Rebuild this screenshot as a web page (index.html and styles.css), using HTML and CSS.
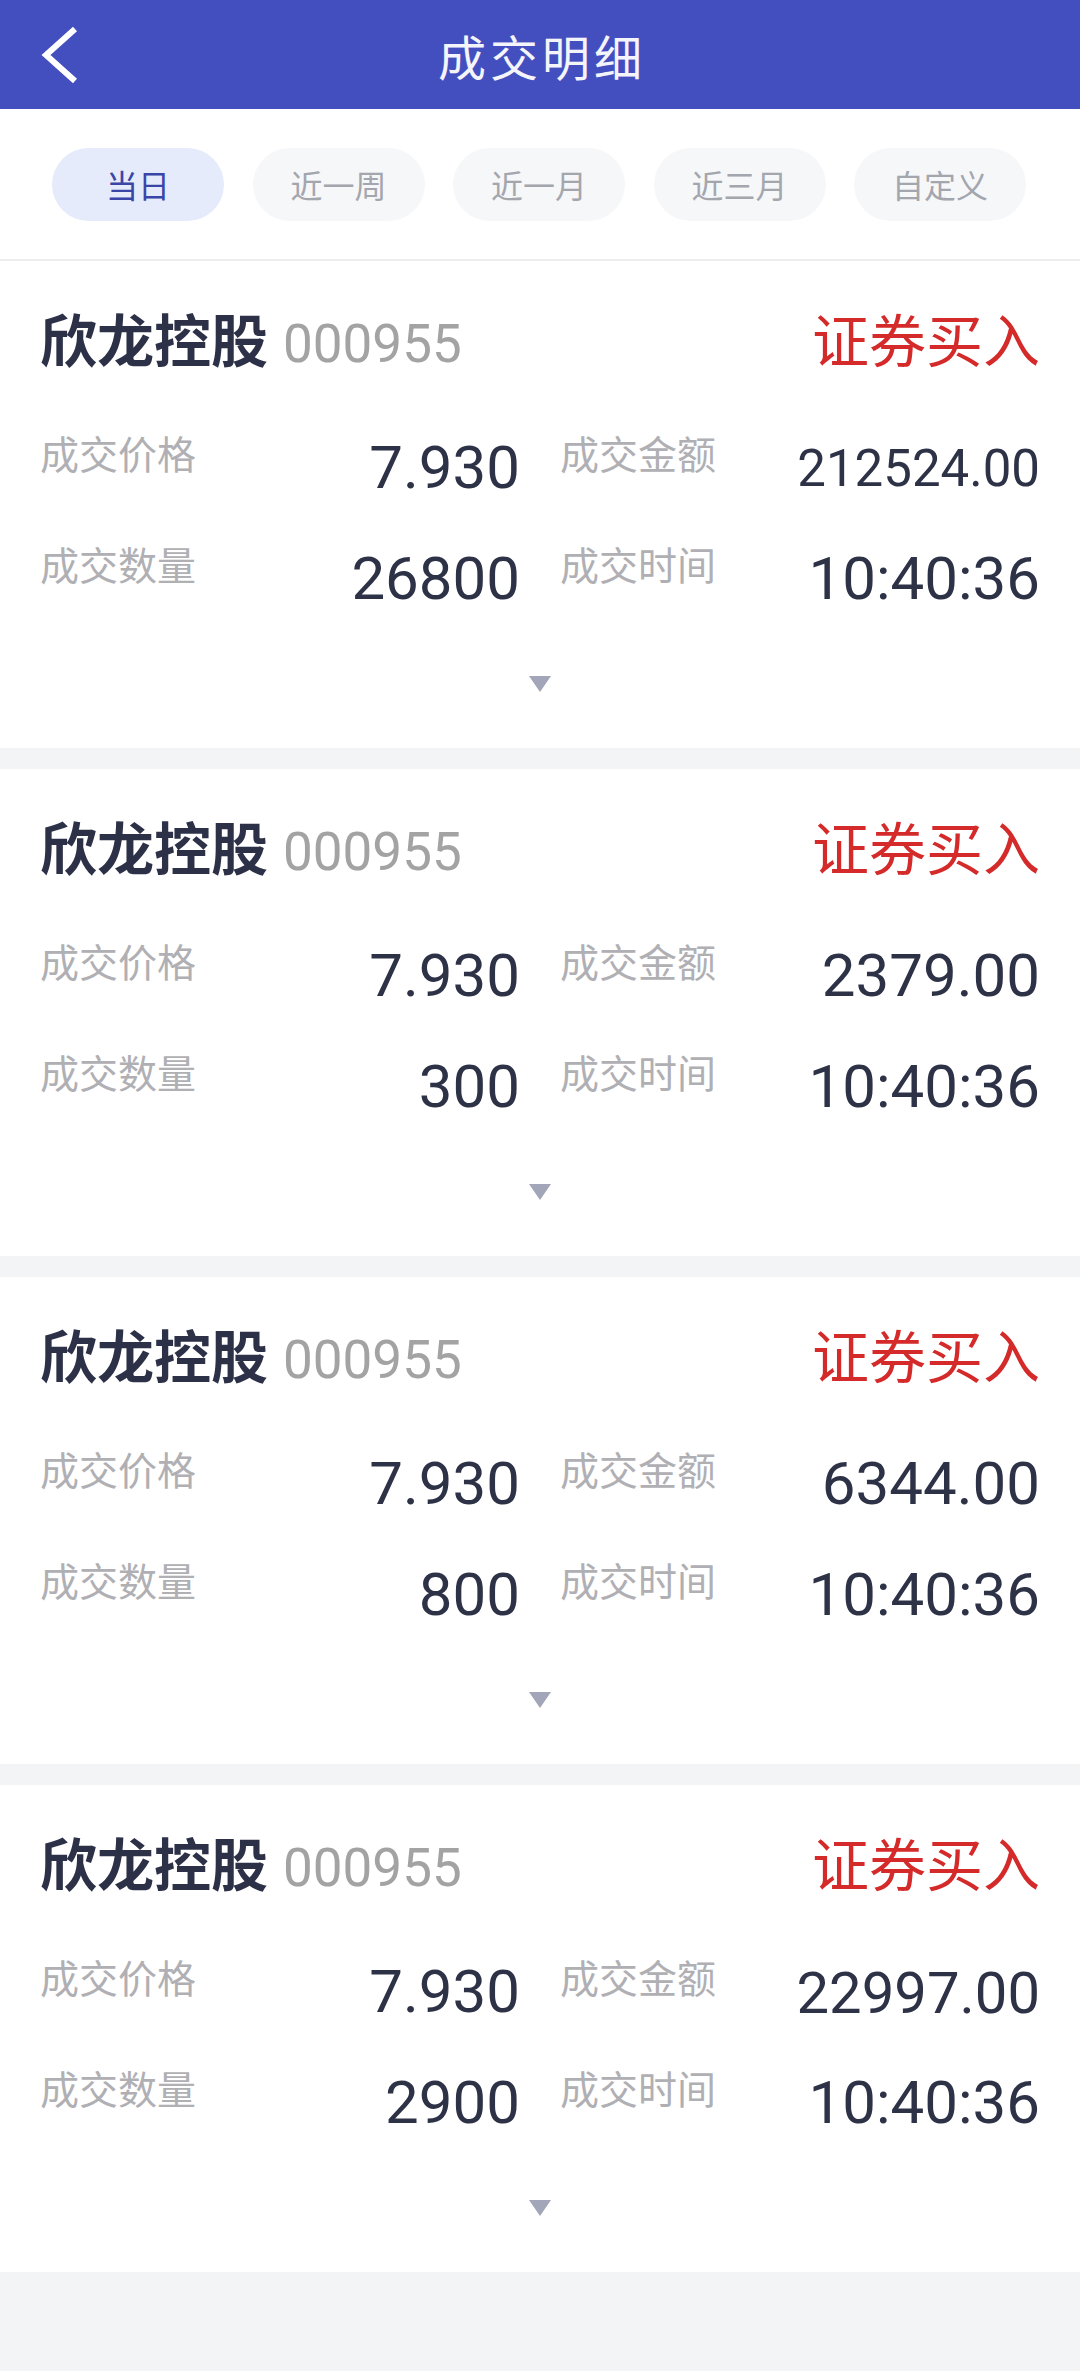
FILE: index.html
```html
<!DOCTYPE html>
<html lang="zh-CN">
<head>
    <meta charset="UTF-8">
    <meta name="viewport" content="width=device-width, initial-scale=1.0">
    <title>成交明细</title>
    <link rel="stylesheet" href="styles.css">
</head>
<body>

    <header class="topbar">
        <a class="back" href="#">
            <svg width="40" height="60" viewBox="0 0 40 60">
                <polyline points="35,4 6,30 35,56" fill="none" stroke="#fff" stroke-width="6"/>
            </svg>
        </a>
        <h1>成交明细</h1>
        <span></span>
    </header>

    <nav class="tabs">
        <span class="tab active">当日</span>
        <span class="tab">近一周</span>
        <span class="tab">近一月</span>
        <span class="tab">近三月</span>
        <span class="tab">自定义</span>
    </nav>

    <main class="list">
        <!-- 成交记录 -->
        <article class="card">
            <div class="card-head">
                <div class="stock"><span class="name">欣龙控股</span><span class="code">000955</span></div>
                <span class="side">证券买入</span>
            </div>
            <div class="fields">
                <div class="field"><span class="label">成交价格</span><span class="value">7.930</span></div>
                <div class="field"><span class="label">成交金额</span><span class="value fit-sm">212524.00</span></div>
                <div class="field"><span class="label">成交数量</span><span class="value">26800</span></div>
                <div class="field"><span class="label">成交时间</span><span class="value">10:40:36</span></div>
            </div>
            <div class="more"><svg width="24" height="16" viewBox="0 0 24 16"><path d="M1 0 H23 L12 16 Z" fill="#a2a6b8"/></svg></div>
        </article>

        <article class="card">
            <div class="card-head">
                <div class="stock"><span class="name">欣龙控股</span><span class="code">000955</span></div>
                <span class="side">证券买入</span>
            </div>
            <div class="fields">
                <div class="field"><span class="label">成交价格</span><span class="value">7.930</span></div>
                <div class="field"><span class="label">成交金额</span><span class="value">2379.00</span></div>
                <div class="field"><span class="label">成交数量</span><span class="value">300</span></div>
                <div class="field"><span class="label">成交时间</span><span class="value">10:40:36</span></div>
            </div>
            <div class="more"><svg width="24" height="16" viewBox="0 0 24 16"><path d="M1 0 H23 L12 16 Z" fill="#a2a6b8"/></svg></div>
        </article>

        <article class="card">
            <div class="card-head">
                <div class="stock"><span class="name">欣龙控股</span><span class="code">000955</span></div>
                <span class="side">证券买入</span>
            </div>
            <div class="fields">
                <div class="field"><span class="label">成交价格</span><span class="value">7.930</span></div>
                <div class="field"><span class="label">成交金额</span><span class="value">6344.00</span></div>
                <div class="field"><span class="label">成交数量</span><span class="value">800</span></div>
                <div class="field"><span class="label">成交时间</span><span class="value">10:40:36</span></div>
            </div>
            <div class="more"><svg width="24" height="16" viewBox="0 0 24 16"><path d="M1 0 H23 L12 16 Z" fill="#a2a6b8"/></svg></div>
        </article>

        <article class="card">
            <div class="card-head">
                <div class="stock"><span class="name">欣龙控股</span><span class="code">000955</span></div>
                <span class="side">证券买入</span>
            </div>
            <div class="fields">
                <div class="field"><span class="label">成交价格</span><span class="value">7.930</span></div>
                <div class="field"><span class="label">成交金额</span><span class="value fit">22997.00</span></div>
                <div class="field"><span class="label">成交数量</span><span class="value">2900</span></div>
                <div class="field"><span class="label">成交时间</span><span class="value">10:40:36</span></div>
            </div>
            <div class="more"><svg width="24" height="16" viewBox="0 0 24 16"><path d="M1 0 H23 L12 16 Z" fill="#a2a6b8"/></svg></div>
        </article>
    </main>

</body>
</html>
```

FILE: styles.css
```css
body {
    margin: 0;
    background-color: #f3f4f6;
    font-family: Roboto, "Noto Sans CJK SC", sans-serif;
    color: #2e3247;
}
.topbar {
    height: 109px;
    background-color: #434ebf;
    display: grid;
    grid-template-columns: 1fr auto 1fr;
    align-items: center;
}
.back {
    display: block;
    width: 40px;
    height: 60px;
    margin-left: 40px;
}
.topbar h1 {
    margin: 0 0 0 4px;
    font-size: 48px;
    font-weight: normal;
    color: #f4f4fb;
    letter-spacing: 4px;
}
.tabs {
    height: 150px;
    background-color: #fff;
    border-bottom: 2px solid #ececec;
    display: flex;
    align-items: center;
    justify-content: space-between;
    padding: 0 54px 0 52px;
}
.tab {
    width: 172px;
    height: 73px;
    border-radius: 37px;
    background-color: #f6f7f9;
    color: #a4a6ae;
    font-size: 32px;
    display: flex;
    align-items: center;
    justify-content: center;
}
.tab.active {
    background-color: #e6ebfb;
    color: #3a45a8;
}
.card {
    background-color: #fff;
    padding: 54px 40px 56px;
    margin-bottom: 21px;
}
.card-head {
    display: flex;
    justify-content: space-between;
    align-items: baseline;
    line-height: 56px;
    height: 56px;
}
.name {
    font-size: 57px;
    font-weight: bold;
    color: #2d3147;
}
.code {
    font-size: 53px;
    color: #a3a3a3;
    margin-left: 15px;
}
.side {
    font-size: 57px;
    color: #d42a2a;
}
.fields {
    margin-top: 66px;
    display: grid;
    grid-template-columns: 1fr 1fr;
    grid-auto-rows: 111px;
    column-gap: 40px;
}
.field {
    display: flex;
    justify-content: space-between;
    align-items: flex-start;
}
.label {
    font-size: 39px;
    line-height: 39px;
    color: #b0b0b4;
}
.value {
    font-size: 60px;
    line-height: 60px;
    margin-top: 1px;
    color: #2e3247;
}
.value.fit {
    font-size: 58px;
    margin-top: 2px;
}
.value.fit-sm {
    font-size: 51px;
    margin-top: 2px;
}
.more {
    margin-top: 17px;
    height: 16px;
    display: flex;
    justify-content: center;
}
.more svg {
    display: block;
}
```
